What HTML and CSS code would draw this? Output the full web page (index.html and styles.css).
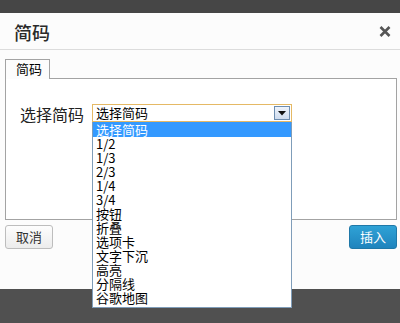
FILE: index.html
```html
<!DOCTYPE html>
<html>
<head>
<meta charset="utf-8">
<link rel="stylesheet" href="styles.css">
</head>
<body>
<div class="dialog">
  <div class="header">
    <span class="title">简码</span>
    <svg class="close" width="12" height="11" viewBox="0 0 12 11"><path d="M1.5 1 L10.5 10 M10.5 1 L1.5 10" stroke="#555" stroke-width="2.6" stroke-linecap="butt"/></svg>
  </div>
  <div class="body">
    <div class="tabs"><div class="tab">简码</div></div>
    <div class="panel">
      <div class="row">
        <span class="label">选择简码</span>
        <div class="select">
          <span class="sel-text">选择简码</span>
          <span class="arrow"><svg width="8" height="5" viewBox="0 0 8 5"><path d="M0 0 H8 L4 4.5 Z" fill="#111"/></svg></span>
          <ul class="list">
            <li class="active">选择简码</li>
            <li>1/2</li>
            <li>1/3</li>
            <li>2/3</li>
            <li>1/4</li>
            <li>3/4</li>
            <li>按钮</li>
            <li>折叠</li>
            <li>选项卡</li>
            <li>文字下沉</li>
            <li>高亮</li>
            <li>分隔线</li>
            <li>谷歌地图</li>
          </ul>
        </div>
      </div>
    </div>
    <div class="actions">
      <button class="btn cancel">取消</button>
      <button class="btn insert">插入</button>
    </div>
  </div>
</div>
</body>
</html>
```
FILE: styles.css
```css
html, body {
  margin: 0;
  padding: 0;
}
body {
  width: 400px;
  height: 323px;
  background: #505050;
  font-family: "Noto Sans CJK SC", "DejaVu Sans", sans-serif;
  overflow: hidden;
  position: relative;
}
body::before {
  content: "";
  display: block;
  height: 13px;
  background: #464646;
}
.dialog {
  height: 276px;
  background: #fcfcfc;
}
.header {
  height: 36px;
  border-bottom: 1px solid #dcdcdc;
  display: flex;
  align-items: center;
  justify-content: space-between;
  padding: 0 9px 0 14px;
}
.title {
  font-size: 18px;
  color: #2a2a2a;
  font-weight: 500;
  line-height: 20px;
  margin-top: 1px;
}
.close {
  display: block;
  margin-top: 1px;
}
.body {
  padding: 9px 3px 0 5px;
}
.tabs {
  display: flex;
  height: 19px;
}
.tab {
  width: 45px;
  height: 20px;
  box-sizing: border-box;
  border: 1px solid #a3a3a3;
  border-bottom: none;
  background: #fcfcfc;
  font-size: 13px;
  line-height: 18px;
  padding-left: 10px;
  color: #000;
  position: relative;
  z-index: 1;
  margin-bottom: -1px;
}
.panel {
  border: 1px solid #a3a3a3;
  background: #fff;
  height: 140px;
}
.row {
  display: flex;
  align-items: flex-start;
  padding: 25px 0 0 14px;
}
.label {
  font-size: 16px;
  line-height: 18px;
  color: #222;
  width: 72px;
  padding-top: 1px;
}
.select {
  position: relative;
  width: 200px;
  height: 18px;
  box-sizing: border-box;
  border: 1px solid #e5b965;
  background: #fff;
  display: flex;
  align-items: center;
  justify-content: space-between;
}
.sel-text {
  font-size: 13px;
  line-height: 16px;
  padding-left: 3px;
  color: #000;
}
.arrow {
  width: 16px;
  height: 14px;
  box-sizing: border-box;
  border: 1px solid #6d8db0;
  background: linear-gradient(#eef3fb, #cfdcee);
  display: flex;
  align-items: center;
  justify-content: center;
  margin-right: 1px;
}
.list {
  position: absolute;
  top: 17px;
  left: -1px;
  width: 200px;
  box-sizing: border-box;
  margin: 0;
  padding: 0 0 2px 0;
  list-style: none;
  background: #fff;
  border: 1px solid #7f9db9;
  border-top: none;
  z-index: 5;
}
.list li {
  font-size: 13px;
  line-height: 14px;
  height: 14px;
  padding-left: 3px;
  color: #000;
  white-space: nowrap;
}
.list li.active {
  background: #3399ff;
  color: #fff;
  height: 15px;
  line-height: 15px;
}
.actions {
  display: flex;
  justify-content: space-between;
  margin-top: 5px;
}
.btn {
  height: 24px;
  box-sizing: border-box;
  font-family: "Noto Sans CJK SC", sans-serif;
  font-size: 13px;
  line-height: 20px;
  padding: 0;
  border-radius: 3px;
  cursor: pointer;
}
.cancel {
  width: 48px;
  border: 1px solid #bdbdbd;
  background: linear-gradient(#fdfdfd, #ececec);
  color: #333;
}
.insert {
  width: 48px;
  border: 1px solid #1f78a8;
  background: linear-gradient(#2fa2d6, #1f84bd);
  color: #fff;
}
```
